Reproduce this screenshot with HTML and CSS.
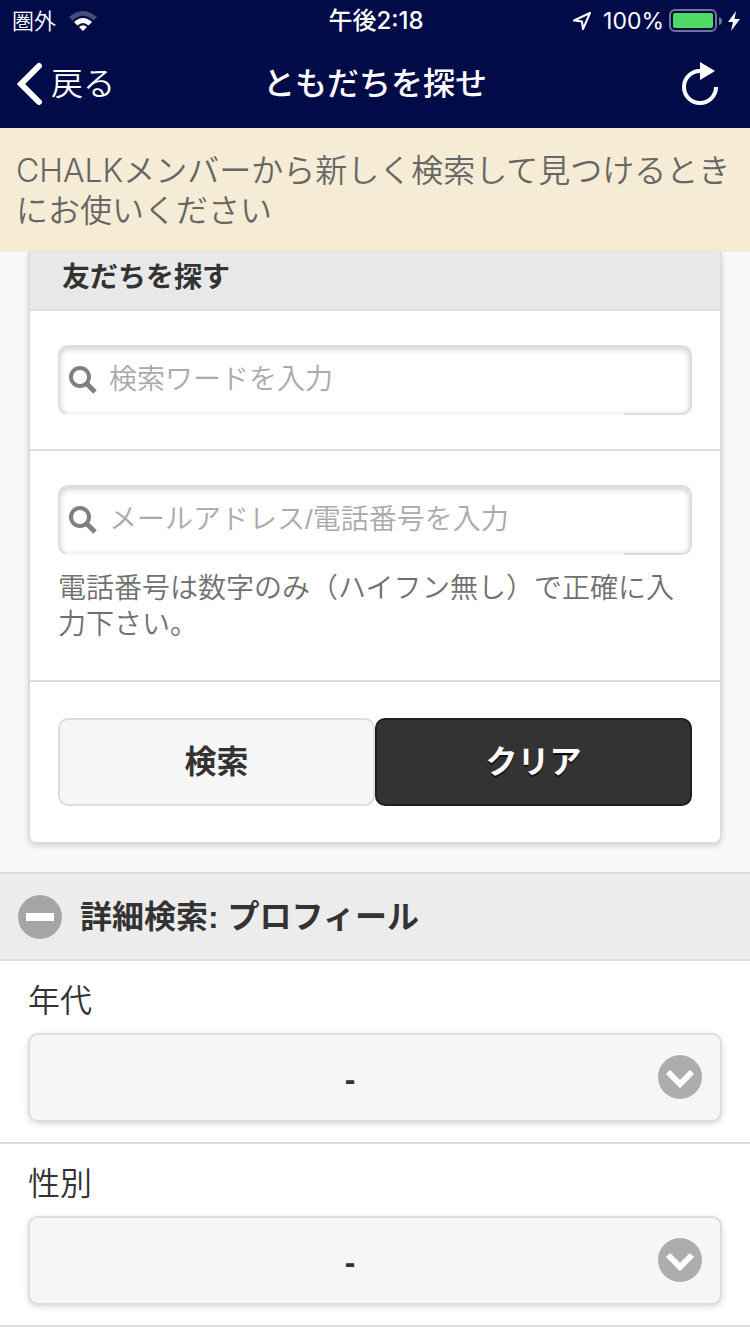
FILE: index.html
```
<!DOCTYPE html>
<html lang="ja">
<head>
    <meta charset="UTF-8">
    <meta name="viewport" content="width=device-width, initial-scale=1.0">
    <title>ともだちを探せ</title>
    <link rel="stylesheet" href="styles.css">
</head>
<body>
    <header class="header">
        <div class="status">
            <div class="status-left">
                <span>圏外</span>
                <svg width="28" height="20" viewBox="0 0 28 20">
                    <path d="M0 6Q14 -6 28 6L24.500 9.500Q14 0 3.500 9.500Z" fill="#484d78"/>
                    <path d="M5 11Q14 3 23 11L19.500 14.500Q14 9.500 8.500 14.500Z" fill="#fff"/>
                    <path d="M10 16Q14 12.500 18 16L14 20Z" fill="#fff"/>
                </svg>
            </div>
            <span class="status-time">午後2:18</span>
            <div class="status-right">
                <svg class="location" width="20" height="20" viewBox="0 0 20 20">
                    <path d="M18 2L2 9.500L10 10.500L11 18Z" fill="none" stroke="#fff" stroke-width="2" stroke-linejoin="round"/>
                </svg>
                <span>100%</span>
                <svg class="battery" width="54" height="24" viewBox="0 0 54 24">
                    <rect x="1" y="1" width="46" height="21" rx="5" fill="none" stroke="#70749a" stroke-width="2"/>
                    <rect x="4" y="4" width="40" height="15" rx="2" fill="#4cd964"/>
                    <path d="M50 8Q53 9 53 12Q53 15 50 16Z" fill="#70749a"/>
                </svg>
                <svg width="12" height="20" viewBox="0 0 12 20">
                    <path d="M8 0L0 11H5L3 20L12 8H6.500Z" fill="#fff"/>
                </svg>
            </div>
        </div>
        <nav class="nav">
            <a href="#" class="back">
                <svg width="26" height="44" viewBox="0 0 26 44">
                    <path d="M22 4L4 22L22 40" fill="none" stroke="#fff" stroke-width="6" stroke-linecap="round"/>
                </svg>
                <span>戻る</span>
            </a>
            <h1 class="title">ともだちを探せ</h1>
            <button type="button" class="reload" aria-label="更新">
                <svg width="36" height="44" viewBox="0 0 36 44">
                    <path d="M18 9A16 16 0 1 0 34 25" fill="none" stroke="#fff" stroke-width="4"/>
                    <path d="M18 0L33 9L18 18Z" fill="#fff"/>
                </svg>
            </button>
        </nav>
    </header>

    <p class="notice">CHALKメンバーから新しく検索して見つけるときにお使いください</p>

    <main>
        <form class="card">
            <h2 class="card-title">友だちを探す</h2>
            <div class="card-row">
                <div class="search">
                    <svg width="28" height="28" viewBox="0 0 28 28">
                        <circle cx="11" cy="11" r="9" fill="none" stroke="#808080" stroke-width="4"/>
                        <path d="M17.500 17.500L26 26" stroke="#808080" stroke-width="5"/>
                    </svg>
                    <input type="text" placeholder="検索ワードを入力" aria-label="検索ワード">
                </div>
            </div>
            <div class="card-row">
                <div class="search">
                    <svg width="28" height="28" viewBox="0 0 28 28">
                        <circle cx="11" cy="11" r="9" fill="none" stroke="#808080" stroke-width="4"/>
                        <path d="M17.500 17.500L26 26" stroke="#808080" stroke-width="5"/>
                    </svg>
                    <input type="text" placeholder="メールアドレス/電話番号を入力" aria-label="メールアドレス/電話番号">
                </div>
                <p class="help">電話番号は数字のみ（ハイフン無し）で正確に入力下さい。</p>
            </div>
            <div class="card-row buttons">
                <button type="submit" class="btn">検索</button>
                <button type="reset" class="btn btn-dark">クリア</button>
            </div>
        </form>

        <section class="detail">
            <h2>
                <button type="button" class="detail-title" aria-expanded="true">
                    <svg width="44" height="44" viewBox="0 0 44 44">
                        <circle cx="22" cy="22" r="22" fill="#a5a5a5"/>
                        <path d="M8 18H36V26H8Z" fill="#fff"/>
                    </svg>
                    <span>詳細検索: プロフィール</span>
                </button>
            </h2>
            <div class="field">
                <label for="age">年代</label>
                <div class="select">
                    <select id="age">
                        <option>-</option>
                    </select>
                    <svg width="44" height="44" viewBox="0 0 44 44">
                        <circle cx="22" cy="22" r="22" fill="#adadad"/>
                        <path d="M10 17L22 29L34 17" fill="none" stroke="#fff" stroke-width="6"/>
                    </svg>
                </div>
            </div>
            <div class="field">
                <label for="gender">性別</label>
                <div class="select">
                    <select id="gender">
                        <option>-</option>
                    </select>
                    <svg width="44" height="44" viewBox="0 0 44 44">
                        <circle cx="22" cy="22" r="22" fill="#adadad"/>
                        <path d="M10 17L22 29L34 17" fill="none" stroke="#fff" stroke-width="6"/>
                    </svg>
                </div>
            </div>
        </section>
    </main>
</body>
</html>
```
FILE: styles.css
```
* {
    margin: 0;
    padding: 0;
    box-sizing: border-box;
}

body {
    background: #fff;
    color: #333;
    font-family: "Liberation Sans", "Noto Sans CJK JP", sans-serif;
    font-size: 32px;
    font-weight: 350;
    line-height: 40px;
}

svg {
    display: block;
    flex: none;
}

button, input, select {
    font: inherit;
    color: inherit;
    border: none;
    background: none;
}

/* header */
.header {
    background: #000b48;
    color: #fff;
}

.status {
    display: grid;
    grid-template-columns: 1fr auto 1fr;
    align-items: center;
    height: 40px;
    padding: 1px 10px 0 12px;
    font-family: Inter, "Noto Sans CJK JP", sans-serif;
    font-size: 22px;
}

.status-left, .status-right {
    display: flex;
    align-items: center;
}

.status-left {
    gap: 13px;
}

.status-time {
    font-size: 24px;
    font-weight: 500;
}

.status-right {
    justify-content: flex-end;
    gap: 5px;
    font-size: 23px;
    font-weight: 400;
}

.location {
    margin-right: 6px;
}

.nav {
    display: grid;
    grid-template-columns: 1fr auto 1fr;
    align-items: center;
    height: 88px;
    padding: 0 17px;
}

.back {
    display: flex;
    align-items: center;
    gap: 8px;
    color: #fff;
    text-decoration: none;
}

.title {
    font-size: 32px;
    font-weight: 500;
}

.reload {
    justify-self: end;
    padding-right: 15px;
    cursor: pointer;
}

.notice {
    padding: 23px 16px 21px;
    background: #f6ebd5;
    color: #666;
    font-family: Inter, "Noto Sans CJK JP", sans-serif;
}

main {
    background: #f9f9f9;
}

/* search card */
.card {
    margin: 0 28px 28px;
    border: 2px solid #ddd;
    border-top: none;
    border-radius: 0 0 8px 8px;
    background: #fff;
    box-shadow: 0 2px 6px rgba(0, 0, 0, 0.15);
}

.card-title {
    padding: 6px 32px 11px;
    background: #e8e8e8;
    border-bottom: 2px solid #ddd;
    font-size: 28px;
    font-weight: 700;
    text-shadow: 0 2px 0 #eee;
}

.card-row {
    padding: 34px 28px;
    border-bottom: 2px solid #ddd;
}

.card-row:last-child {
    border-bottom: none;
}

.search {
    position: relative;
    display: flex;
    align-items: center;
    gap: 12px;
    height: 70px;
    padding: 0 9px;
    border: 2px solid #ddd;
    border-radius: 10px;
    box-shadow: inset 0 2px 6px rgba(0, 0, 0, 0.2);
    font-size: 28px;
}

/* lighter part of the bottom border */
.search::after {
    content: "";
    position: absolute;
    left: 6px;
    right: 66px;
    bottom: -2px;
    height: 2px;
    background: #f6f6f6;
}

.search input {
    flex: 1;
    min-width: 0;
    height: 60px;
    outline: none;
}

.search input::placeholder {
    color: #aaa;
}

.help {
    margin-top: 16px;
    padding-bottom: 3px;
    color: #707070;
    font-size: 28px;
    line-height: 36px;
}

.buttons {
    display: flex;
    padding: 36px 28px;
}

.btn {
    flex: 1;
    height: 88px;
    border: 2px solid #ddd;
    border-radius: 10px;
    background: #f6f6f6;
    font-weight: 700;
    cursor: pointer;
}

.btn-dark {
    border-color: #1f1f1f;
    background: #333;
    color: #fff;
    text-shadow: 0 2px 0 #111;
}

/* detail search */
.detail {
    background: #fff;
}

.detail-title {
    display: flex;
    align-items: center;
    gap: 18px;
    width: 100%;
    height: 89px;
    padding: 0 18px;
    border-top: 2px solid #ddd;
    border-bottom: 2px solid #ddd;
    background: #ececec;
    font-size: 32px;
    font-weight: 700;
    cursor: pointer;
}

.field {
    padding: 20px 28px;
    border-bottom: 2px solid #ddd;
}

.field label {
    display: block;
    margin-bottom: 12px;
}

.select {
    position: relative;
}

.select select {
    display: block;
    width: 100%;
    height: 89px;
    padding: 2px 74px 0 24px;
    appearance: none;
    border: 2px solid #ddd;
    border-radius: 10px;
    background: #f6f6f6;
    box-shadow: 0 2px 6px rgba(0, 0, 0, 0.15);
    font-weight: 700;
    text-align-last: center;
}

.select svg {
    position: absolute;
    top: 22px;
    right: 20px;
    pointer-events: none;
}
```
